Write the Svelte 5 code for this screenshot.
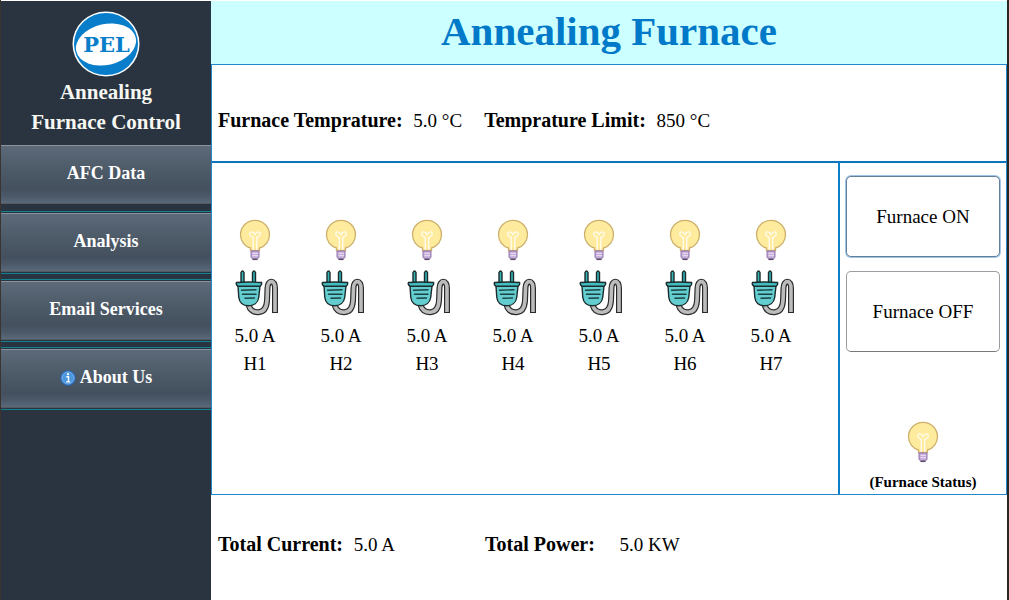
<script>
  const nav = [
    { label: 'AFC Data' },
    { label: 'Analysis' },
    { label: 'Email Services' },
    { label: 'About Us', info: true }
  ];
  const heaters = ['H1', 'H2', 'H3', 'H4', 'H5', 'H6', 'H7'];
  const current = '5.0';
  let furnaceOn = $state(true);
</script>

{#snippet bulb()}
  <svg class="bulb" viewBox="0 0 32 42" aria-hidden="true">
    <path d="M11.5 31.5V29C5.500 27.500 1.500 22 1.500 15.800a14.500 14.500 0 0 1 29 0C30.500 22 26.500 27.500 20.500 29v2.500z" fill="#ffeb9e" stroke="#cdb06c" stroke-width="1.300" />
    <path d="M14.300 31V18.500c-3-1.500-4.300-3.500-3.300-4.800 1.500-1.700 3.500-.5 5 1.800 1.500-2.300 3.500-3.500 5-1.800 1 1.300-.3 3.300-3.300 4.800V31" fill="none" stroke="#fffbea" stroke-width="1.400" />
    <path d="M12 32h8v6.500l-2 1.500h-4l-2-1.500z" fill="#c3abd9" stroke="#8f75ae" stroke-width="1" />
    <path d="M13.500 34.300h5.500M13.500 36.700h5.500" stroke="#f0e4f6" stroke-width="1" />
    <path d="M13.500 40.400h5" stroke="#594866" stroke-width="1.400" />
  </svg>
{/snippet}

{#snippet plug()}
  <svg class="plug" viewBox="0 0 44 48" aria-hidden="true">
    <path d="M13.500 36c1.500 5 5 7.500 10 7.200 6-.4 8-5 8.500-11.200l.5-13c.3-8.500 7.500-8.500 7.500 0V44" fill="none" stroke="#2b2b2b" stroke-width="6" />
    <path d="M13.500 36c1.500 5 5 7.500 10 7.200 6-.4 8-5 8.500-11.200l.5-13c.3-8.500 7.500-8.500 7.500 0V43" fill="none" stroke="#bcbcbc" stroke-width="3.600" />
    <path d="M6 14V3.500q1.500-3 3 0V14zM17.500 14V3.500q1.500-3 3 0V14z" fill="#35b5b5" stroke="#1c2b2d" stroke-width="1.400" />
    <path d="M3 17l.8 11.500C4.500 33.500 8 36.800 13.500 36.800S23 33.500 23.700 28.500L25 17z" fill="#63cdd0" stroke="#1c2b2d" stroke-width="1.400" />
    <path d="M1.500 13.500q12.500-1 25 0 .8 2-1.500 3.800H3Q.5 15.500 1.500 13.500z" fill="#43bec0" stroke="#1c2b2d" stroke-width="1.400" />
    <path d="M6.500 21.200l14.500-.4M7.500 25.200H21M10 29.300l9.500-.3" fill="none" stroke="#1c4143" stroke-width="1.400" stroke-linecap="round" />
  </svg>
{/snippet}

<div class="page">
  <aside>
    <div class="brand">
      <svg class="logo" viewBox="0 0 68 66" role="img" aria-label="PEL">
        <ellipse cx="34" cy="33" rx="33.500" ry="32.500" fill="#fff" />
        <ellipse cx="34" cy="33" rx="32" ry="31" fill="#087dc9" />
        <ellipse cx="34" cy="33.500" rx="30.500" ry="20.500" fill="#fff" transform="rotate(-13 34 33.500)" />
        <text x="34.500" y="41" text-anchor="middle">PEL</text>
      </svg>
      <p>Annealing<br />Furnace Control</p>
    </div>
    <nav>
      {#each nav as item}
        <div class="item">
          <button type="button">
            {#if item.info}
              <svg class="info" viewBox="0 0 16 16" aria-hidden="true">
                <circle cx="8" cy="8" r="7.700" fill="#2869b7" />
                <circle cx="8" cy="8" r="6.100" fill="#4d97df" stroke="#8dbced" stroke-width="0.800" />
                <path d="M6.300 6.700h2.200v5M6.200 11.900h4" fill="none" stroke="#fff" stroke-width="1.400" />
                <circle cx="8" cy="4.200" r="1.100" fill="#fff" />
              </svg>
            {/if}
            {item.label}
          </button>
        </div>
      {/each}
    </nav>
  </aside>

  <main>
    <header><h1>Annealing Furnace</h1></header>

    <section class="readings">
      <p><strong>Furnace Temprature:</strong> <span>5.0 °C</span></p>
      <p><strong>Temprature Limit:</strong> <span>850 °C</span></p>
    </section>

    <section class="middle">
      <div class="heaters">
        {#each heaters as name}
          <div class="heater">
            {@render bulb()}
            {@render plug()}
            <span>{current} A</span>
            <span>{name}</span>
          </div>
        {/each}
      </div>
      <div class="controls">
        <button type="button" class:active={furnaceOn} onclick={() => (furnaceOn = true)}>Furnace ON</button>
        <button type="button" class:active={!furnaceOn} onclick={() => (furnaceOn = false)}>Furnace OFF</button>
        <div class="status">
          {@render bulb()}
          <strong>(Furnace Status)</strong>
        </div>
      </div>
    </section>

    <section class="totals">
      <p><strong>Total Current:</strong> <span>{current} A</span></p>
      <p class="power"><strong>Total Power:</strong> <span>5.0 KW</span></p>
    </section>
  </main>
</div>

<style>
  :global(body) {
    margin: 0;
    background: #fff;
  }
  .page {
    box-sizing: border-box;
    min-height: 100vh;
    display: flex;
    border-left: 1px solid #3b3532;
    border-right: 2px solid #2b2622;
    padding-top: 1px;
    font-family: "Liberation Serif", "Times New Roman", serif;
    font-size: 19px;
    color: #000;
  }
  p,
  h1 {
    margin: 0;
  }
  button {
    font: inherit;
    cursor: pointer;
  }
  aside {
    flex: 0 0 210px;
    background: #293440;
    color: #fff;
  }
  .brand {
    display: flex;
    flex-direction: column;
    align-items: center;
    padding: 10px 0 6px;
    text-align: center;
  }
  .brand p {
    font-family: "Palatino Linotype", "Book Antiqua", "Liberation Serif", serif;
    font-size: 21px;
    font-weight: bold;
    line-height: 30px;
    color: #f7f7f2;
  }
  .logo {
    width: 68px;
    height: 66px;
  }
  .logo text {
    font: bold 21px "DejaVu Serif", serif;
    fill: #087dc9;
  }
  nav {
    display: grid;
    gap: 5px;
  }
  .item {
    padding: 1px 0;
    border: solid #128190;
    border-width: 1px 0;
  }
  .item:first-child {
    border-color: transparent;
  }
  .item button {
    width: 100%;
    height: 59px;
    display: flex;
    align-items: center;
    justify-content: center;
    gap: 4px;
    padding: 0 0 2px;
    border: 0;
    border-top: 1px solid #8a929b;
    border-bottom: 1px solid #555a60;
    background: linear-gradient(#5c6a79, #4c5967 45%, #44505e 75%, #4b5969 88%, #5a6979);
    color: #fff;
    font-family: "Palatino Linotype", "Book Antiqua", "Liberation Serif", serif;
    font-size: 18px;
    font-weight: bold;
  }
  .info {
    width: 16px;
    height: 16px;
  }
  main {
    flex: 1;
    min-width: 0;
    display: flex;
    flex-direction: column;
  }
  header {
    padding: 6px 0 9px;
    background: #ccffff;
    text-align: center;
  }
  h1 {
    font-family: "Palatino Linotype", "Book Antiqua", "Liberation Serif", serif;
    font-size: 41px;
    line-height: 48px;
    color: #007ac8;
  }
  section {
    border: 1px solid #2488cc;
    border-bottom: 0;
  }
  .readings,
  .totals {
    display: flex;
    align-items: center;
    padding: 0 6px;
    line-height: 24px;
  }
  .readings {
    gap: 22px;
    height: 96px;
  }
  .readings p {
    padding-top: 14px;
  }
  .readings strong,
  .totals strong {
    font-size: 20px;
  }
  .readings span,
  .totals span {
    margin-left: 6px;
  }
  .middle {
    flex: 1;
    display: flex;
    border-top: 2px solid #0c75c0;
    border-bottom: 1px solid #2488cc;
  }
  .heaters {
    flex: 1;
    display: grid;
    grid-template-columns: repeat(7, 86px);
    align-content: start;
    padding-top: 56px;
  }
  .heater {
    display: flex;
    flex-direction: column;
    align-items: center;
    line-height: 28px;
  }
  .bulb {
    width: 32px;
    height: 42px;
  }
  .plug {
    width: 44px;
    height: 48px;
    margin: 8px 0 5px 4px;
  }
  .controls {
    flex: 0 0 154px;
    display: flex;
    flex-direction: column;
    gap: 14px;
    padding: 13px 6px 2px;
    border-left: 2px solid #0c7fc8;
  }
  .controls button {
    height: 81px;
    padding: 0;
    border: 1px solid #9a9da1;
    border-bottom-color: #77797c;
    border-radius: 5px;
    background: #fff;
    color: #000;
  }
  .controls button.active {
    border-color: #667f98;
    box-shadow: 0 0 0 1px #9fc6e8;
  }
  .status {
    display: flex;
    flex-direction: column;
    align-items: center;
    gap: 9px;
    margin-top: auto;
    font-size: 15px;
    line-height: 20px;
  }
  .totals {
    height: 105px;
    border: 0;
    padding-left: 7px;
  }
  .totals p {
    flex: 0 0 267px;
    padding-bottom: 6px;
  }
  .totals .power span {
    margin-left: 20px;
  }
</style>
